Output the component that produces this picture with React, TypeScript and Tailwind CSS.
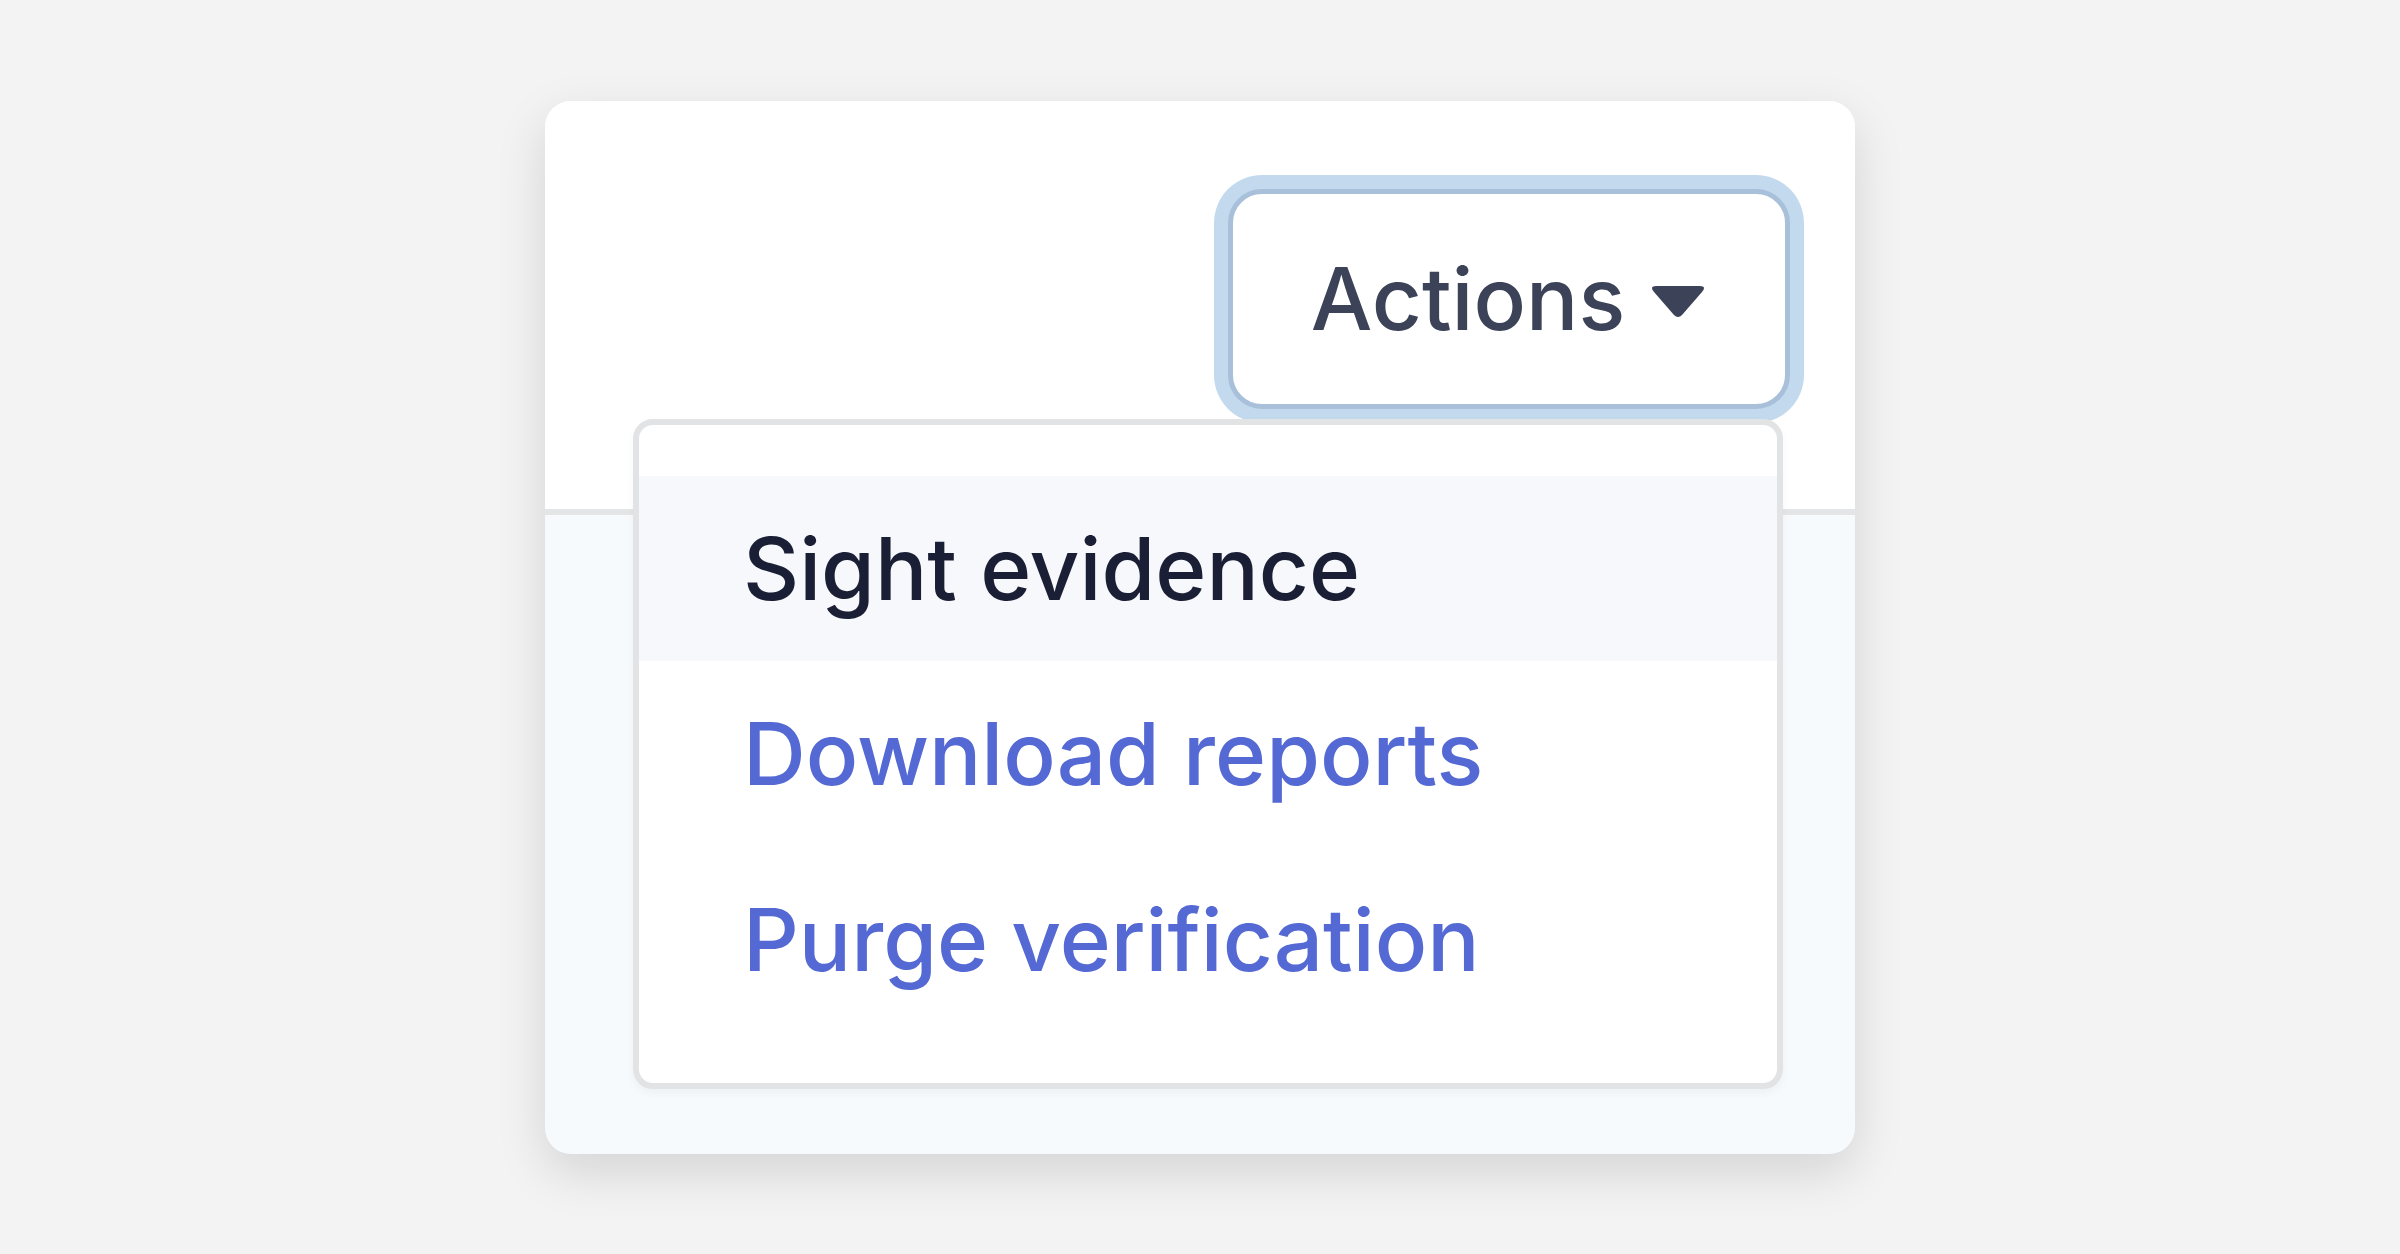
import React from "react";

export default function App() {
  return (
    <div
      className="min-h-screen w-full flex items-center justify-center bg-[#f3f3f3]"
      style={{ fontFamily: "Inter, 'Noto Sans', sans-serif" }}
    >
      <div className="relative w-[1310px] h-[1053px] rounded-[26px] bg-[#f7fafc] shadow-[0_18px_50px_rgba(0,0,0,0.13)] flex flex-col overflow-visible">
        <div className="h-[414px] shrink-0 bg-white rounded-t-[26px] border-b-[6px] border-[#e4e5e7] flex justify-end items-start pt-[88px] pr-[65px]">
          <button className="w-[562px] h-[220px] rounded-[34px] bg-white border-[5px] border-[#a8c0d9] shadow-[0_0_0_14px_#c3d9ee] flex items-center justify-center gap-[24px] text-[#3c4257]">
            <span className="text-[87px] leading-none font-medium tracking-normal">Actions</span>
            <svg width="58" height="34" viewBox="0 0 58 34" className="mt-[6px]">
              <path
                d="M7 1 L51 1 Q58 1 53 7 L33 30 Q29 34 25 30 L5 7 Q0 1 7 1 Z"
                fill="#3c4257"
              />
            </svg>
          </button>
        </div>
        <div className="flex-1" />
        <div className="absolute left-[88px] top-[318px] w-[1150px] h-[670px] rounded-[20px] border-[6px] border-[#e2e3e5] bg-white shadow-[0_4px_10px_rgba(0,0,0,0.04)] pt-[51px] flex flex-col">
          <div className="h-[185px] bg-[#f6f8fb] flex items-center pl-[104px] text-[#1a1f36] text-[87px] leading-none font-medium tracking-normal">
            Sight evidence
          </div>
          <div className="h-[186px] flex items-center pl-[104px] text-[#5469d4] text-[87px] leading-none font-medium tracking-normal">
            Download reports
          </div>
          <div className="h-[186px] flex items-center pl-[104px] text-[#5469d4] text-[87px] leading-none font-medium tracking-normal">
            Purge verification
          </div>
        </div>
      </div>
    </div>
  );
}
